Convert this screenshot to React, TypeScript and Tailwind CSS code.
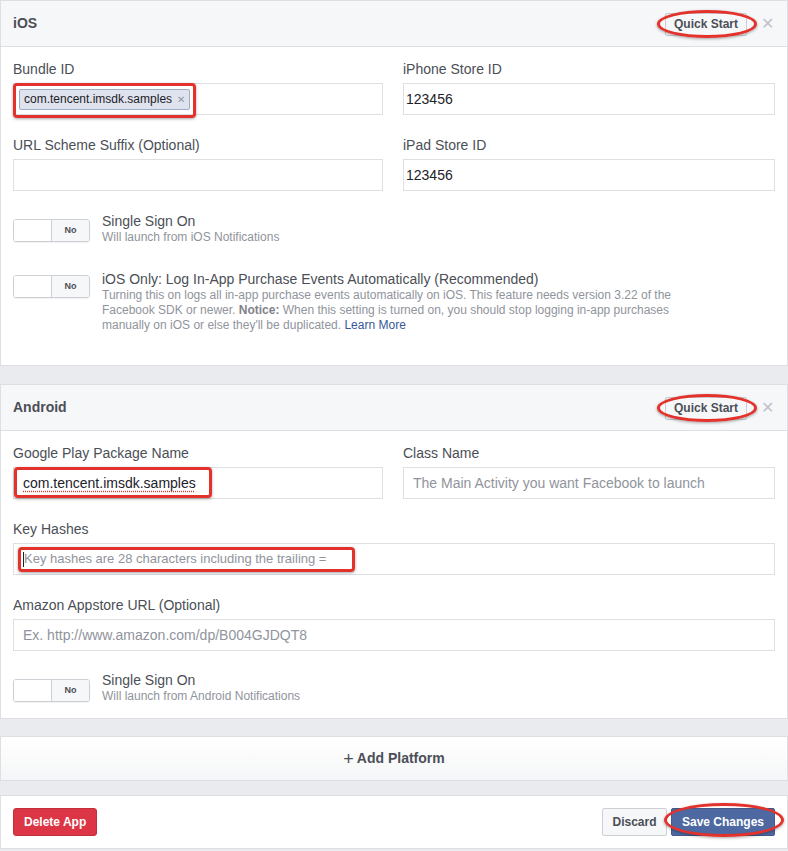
import React from "react";

const Toggle = ({ className = "" }: { className?: string }) => (
  <div
    className={`flex h-[23px] w-[77px] shrink-0 overflow-hidden rounded-[3px] border border-[#ccd0d5] shadow-[0_1px_1px_rgba(0,0,0,0.06)] ${className}`}
  >
    <div className="w-[38px] border-r border-[#ccd0d5] bg-white" />
    <div className="flex flex-1 items-center justify-center bg-[#f6f7f9] text-[9px] font-bold text-[#4b4f56]">
      No
    </div>
  </div>
);

const Field = ({ label, children }: { label: string; children: React.ReactNode }) => (
  <div>
    <div className="mb-[5px] text-[14px] leading-[18px] text-[#4b4f56]">{label}</div>
    {children}
  </div>
);

const Input = ({ children, className = "" }: { children?: React.ReactNode; className?: string }) => (
  <div
    className={`relative flex h-[32px] items-center border border-[#dddfe2] bg-white text-[14px] text-[#1d2129] ${className}`}
  >
    {children}
  </div>
);

const Placeholder = ({ text }: { text: string }) => (
  <span className="pl-[9px] text-[#90949c]">{text}</span>
);

// red hand-drawn marks on the screenshot
const Ellipse = ({ className }: { className: string }) => (
  <div
    className={`pointer-events-none absolute rounded-[50%] border-[3px] border-[#e2322b] shadow-[0_1px_3px_rgba(0,0,0,0.35)] ${className}`}
  />
);

const Mark = ({ className }: { className: string }) => (
  <div
    className={`pointer-events-none absolute rounded-[4px] border-[3px] border-[#e2322b] shadow-[0_1px_3px_rgba(0,0,0,0.35)] ${className}`}
  />
);

const PanelHeader = ({ title }: { title: string }) => (
  <div className="flex h-[46px] items-center justify-between border-b border-[#dddfe2] bg-[#f6f7f9] pl-[12px] pr-[13px]">
    <span className="text-[14px] font-bold text-[#4b4f56]">{title}</span>
    <div className="flex items-center">
      <div className="relative">
        <button className="h-[23px] w-[82px] rounded-[2px] border border-[#ccd0d5] bg-[#f6f7f9] text-[12px] font-bold text-[#4b4f56]">
          Quick Start
        </button>
        <Ellipse className="-left-[8px] -right-[10px] -top-[1px] -bottom-[2px]" />
      </div>
      <span className="ml-[14px] text-[16px] leading-none text-[#bec2c9]">✕</span>
    </div>
  </div>
);

const App = () => {
  return (
    <div className="min-h-screen w-[788px] bg-[#e9ebee] font-[family-name:'Liberation_Sans',Arial,sans-serif]">
      {/* iOS */}
      <div className="border border-[#dddfe2] bg-white">
        <PanelHeader title="iOS" />
        <div className="px-[12px] pb-[32px] pt-[13px]">
          <div className="grid grid-cols-[370px_372px] gap-x-[20px] gap-y-[21px]">
            <Field label="Bundle ID">
              <Input>
                <span className="ml-[5px] flex h-[21px] items-center rounded-[2px] border border-[#9daccb] bg-[#dfe3ee] pl-[4px] pr-[4px] text-[12px] text-[#1d2129]">
                  com.tencent.imsdk.samples
                  <span className="ml-[5px] text-[10px] text-[#9197a3]">✕</span>
                </span>
                <Mark className="-left-[1px] -top-[1px] h-[35px] w-[183px]" />
              </Input>
            </Field>
            <Field label="iPhone Store ID">
              <Input>
                <span className="pl-[2px]">123456</span>
              </Input>
            </Field>
            <Field label="URL Scheme Suffix (Optional)">
              <Input />
            </Field>
            <Field label="iPad Store ID">
              <Input>
                <span className="pl-[2px]">123456</span>
              </Input>
            </Field>
          </div>

          <div className="mt-[21px] flex gap-[12px]">
            <Toggle className="mt-[7px]" />
            <div>
              <div className="text-[14px] leading-[18px] text-[#4b4f56]">Single Sign On</div>
              <div className="text-[12px] leading-[15px] text-[#90949c]">Will launch from iOS Notifications</div>
            </div>
          </div>

          <div className="mt-[25px] flex gap-[12px]">
            <Toggle className="mt-[5px]" />
            <div>
              <div className="text-[14px] leading-[18px] text-[#4b4f56]">
                iOS Only: Log In-App Purchase Events Automatically (Recommended)
              </div>
              <div className="text-[12px] leading-[15px] text-[#90949c]">
                Turning this on logs all in-app purchase events automatically on iOS. This feature needs version 3.22 of the
                <br />
                Facebook SDK or newer. <span className="font-bold text-[#7f8389]">Notice:</span> When this setting is turned on, you
                should stop logging in-app purchases
                <br />
                manually on iOS or else they'll be duplicated. <span className="text-[#365899]">Learn More</span>
              </div>
            </div>
          </div>
        </div>
      </div>

      {/* Android */}
      <div className="mt-[18px] border border-[#dddfe2] bg-white">
        <PanelHeader title="Android" />
        <div className="px-[12px] pb-[14px] pt-[13px]">
          <div className="grid grid-cols-[370px_372px] gap-x-[20px] gap-y-[21px]">
            <Field label="Google Play Package Name">
              <Input>
                <span className="pl-[9px] underline decoration-[#e2322b] decoration-dotted underline-offset-[3px]">
                  com.tencent.imsdk.samples
                </span>
                <Mark className="left-0 -top-[1px] h-[31px] w-[198px]" />
              </Input>
            </Field>
            <Field label="Class Name">
              <Input>
                <Placeholder text="The Main Activity you want Facebook to launch" />
              </Input>
            </Field>
            <div className="col-span-2">
              <Field label="Key Hashes">
                <Input>
                  <span className="ml-[9px] h-[15px] border-l border-[#1d2129]" />
                  <span className="text-[13px] text-[#90949c]">Key hashes are 28 characters including the trailing =</span>
                  <Mark className="left-[4px] top-[3px] h-[25px] w-[337px]" />
                </Input>
              </Field>
            </div>
            <div className="col-span-2">
              <Field label="Amazon Appstore URL (Optional)">
                <Input>
                  <Placeholder text="Ex. http://www.amazon.com/dp/B004GJDQT8" />
                </Input>
              </Field>
            </div>
          </div>

          <div className="mt-[20px] flex gap-[12px]">
            <Toggle className="mt-[8px]" />
            <div>
              <div className="text-[14px] leading-[18px] text-[#4b4f56]">Single Sign On</div>
              <div className="text-[12px] leading-[15px] text-[#90949c]">Will launch from Android Notifications</div>
            </div>
          </div>
        </div>
      </div>

      {/* Add Platform */}
      <div className="mt-[17px] flex h-[45px] items-center justify-center border border-[#dddfe2] bg-gradient-to-b from-white to-[#f5f6f7] text-[14px] text-[#4b4f56]">
        <span className="mr-[3px] text-[18px] leading-none">+</span>
        <span className="font-bold">Add Platform</span>
      </div>

      {/* Footer */}
      <div className="mt-[14px] flex items-center justify-between border border-[#dddfe2] bg-white px-[12px] py-[12px]">
        <button className="h-[28px] rounded-[3px] border border-[#c3303a] bg-[#dc3545] px-[10px] text-[12px] font-bold text-white">
          Delete App
        </button>
        <div className="flex items-center">
          <button className="h-[28px] w-[65px] rounded-[2px] border border-[#ced0d4] bg-[#f6f7f9] text-[12px] font-bold text-[#4b4f56]">
            Discard
          </button>
          <div className="relative ml-[4px]">
            <button className="h-[28px] w-[104px] rounded-[2px] border border-[#435a8b] bg-[#4e69a2] text-[12px] font-bold text-white">
              Save Changes
            </button>
            <Ellipse className="-left-[7px] -right-[9px] -top-[5px] -bottom-[1px]" />
          </div>
        </div>
      </div>
    </div>
  );
};

export default App;
